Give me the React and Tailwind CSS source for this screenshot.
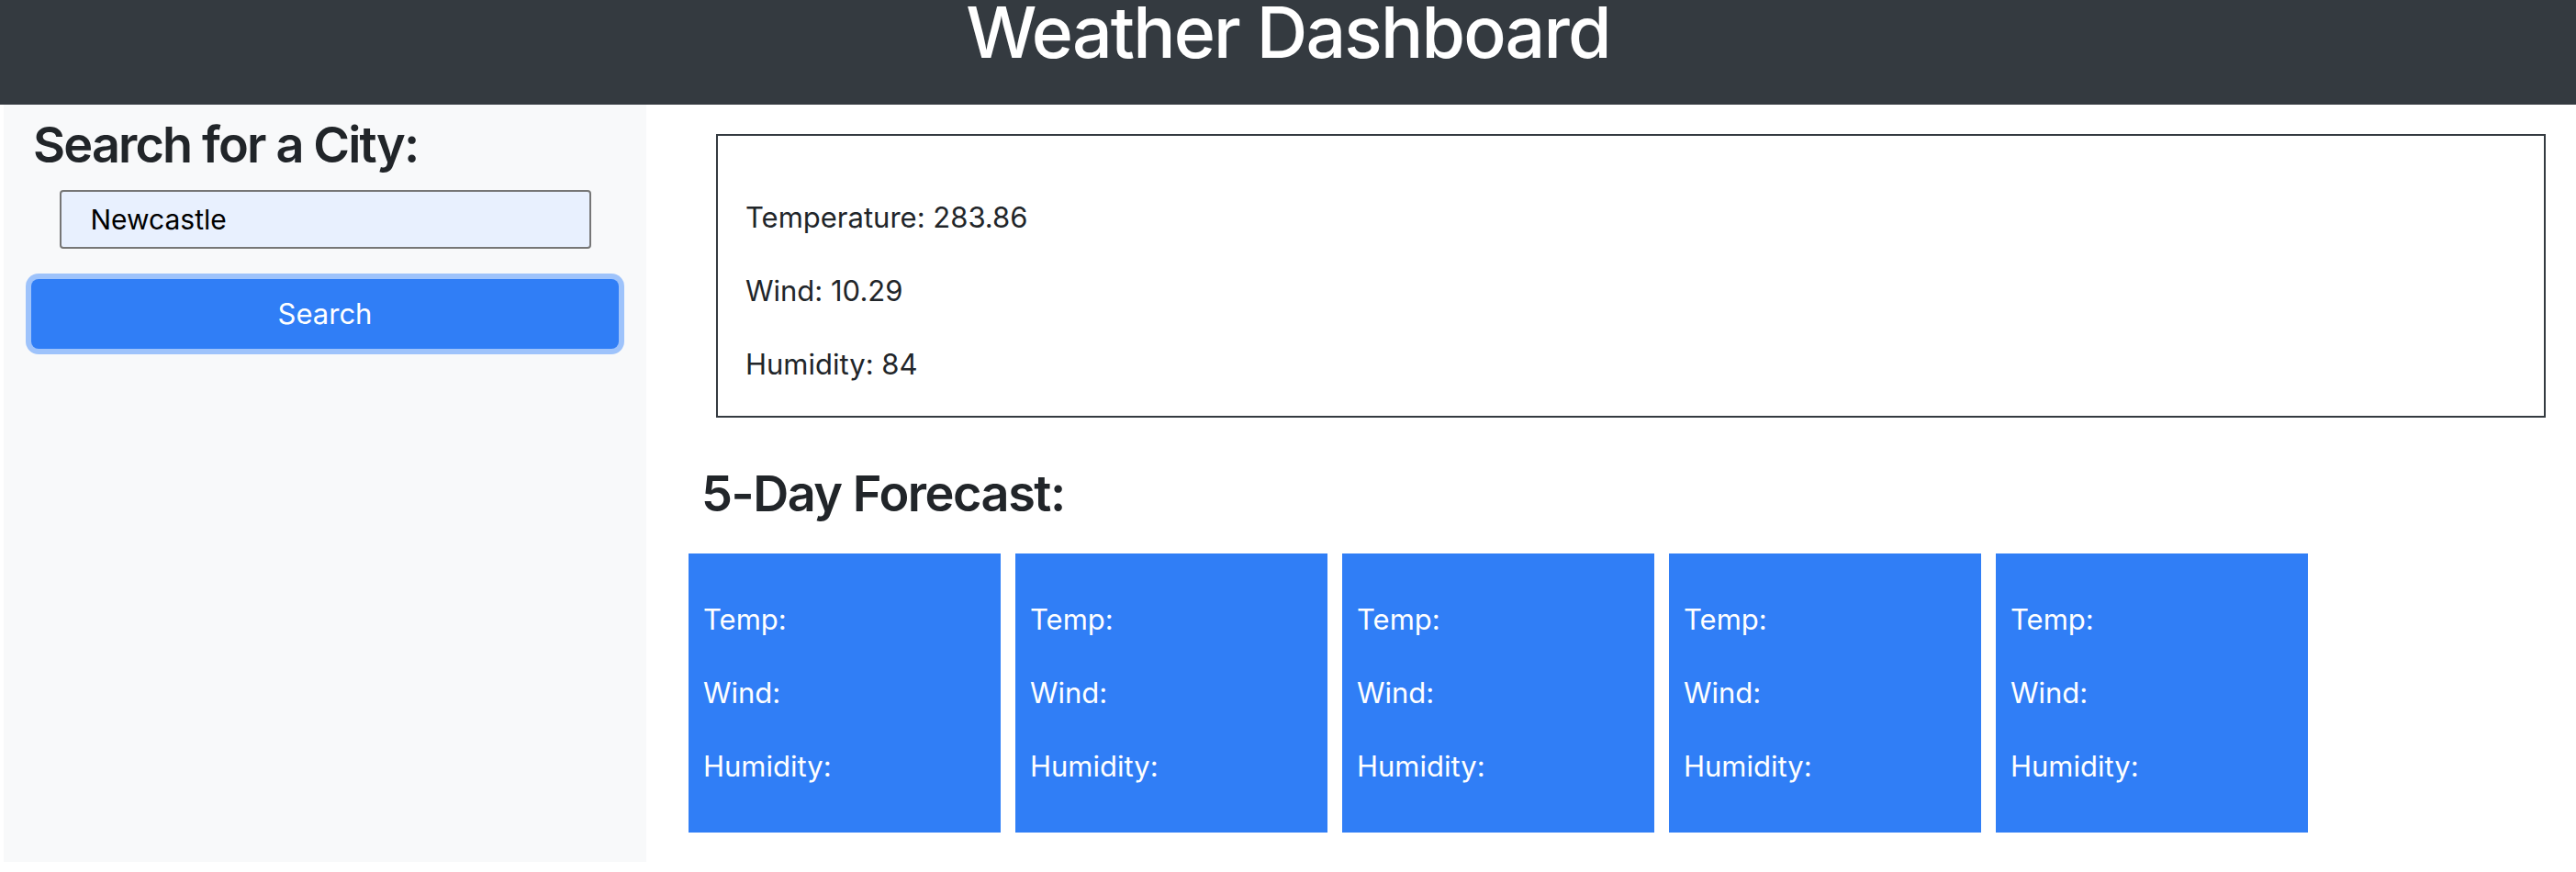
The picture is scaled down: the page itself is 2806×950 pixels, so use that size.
const days = [1, 2, 3, 4, 5];

const ForecastCard = () => (
  <div className="w-[340px] h-[304px] bg-[#307ef6] text-white pt-[48px] px-[16px] pb-[16px]">
    <p className="text-[31px] leading-[48px] mb-[32px]">Temp:</p>
    <p className="text-[31px] leading-[48px] mb-[32px]">Wind:</p>
    <p className="text-[31px] leading-[48px] mb-[32px]">Humidity:</p>
  </div>
);

export default function App() {
  return (
    <div className="w-[2806px] min-h-[950px] bg-white text-[#212529] font-['Inter',sans-serif]">
      {/* header */}
      <header className="bg-[#343a40] h-[114px]">
        <h1 className="text-white text-center text-[77px] leading-[70px] tracking-[-0.024em] font-medium">Weather Dashboard</h1>
      </header>

      <div className="flex items-stretch">
        {/* sidebar */}
        <aside className="ml-[4px] w-[700px] bg-[#f8f9fa] pt-[10px] pb-[20px]">
          <h3 className="pl-[32px] text-[54px] leading-[67px] tracking-[-0.034em] font-semibold mb-[16px]">Search for a City:</h3>
          <div className="flex justify-center">
            <input
              type="text"
              defaultValue="Newcastle"
              className="w-[579px] h-[64px] bg-[#e8f0fe] border-2 border-[#767676] rounded-[4px] pl-[32px] text-[30px] text-black outline-none"
            />
          </div>
          <div className="flex justify-center mt-[33px]">
            <button className="w-[640px] h-[76px] bg-[#307ef6] text-white text-[31px] rounded-[8px] ring-[6px] ring-[#9ec3fb]">
              Search
            </button>
          </div>
        </aside>

        {/* main */}
        <main className="flex-1 pl-[46px] pr-[33px] pb-[32px]">
          <section className="ml-[30px] mt-[32px] border-2 border-[#343a40] pt-[65px] pl-[30px]">
            <p className="text-[31px] leading-[48px] mb-[32px]">Temperature: 283.86</p>
            <p className="text-[31px] leading-[48px] mb-[32px]">Wind: 10.29</p>
            <p className="text-[31px] leading-[48px] mb-[32px]">Humidity: 84</p>
          </section>
          <h3 className="ml-[14px] mt-[49px] mb-[32px] text-[54px] leading-[67px] tracking-[-0.027em] font-semibold">5-Day Forecast:</h3>
          <div className="flex gap-[16px]">
            {days.map((d) => (
              <ForecastCard key={d} />
            ))}
          </div>
        </main>
      </div>
    </div>
  );
}
